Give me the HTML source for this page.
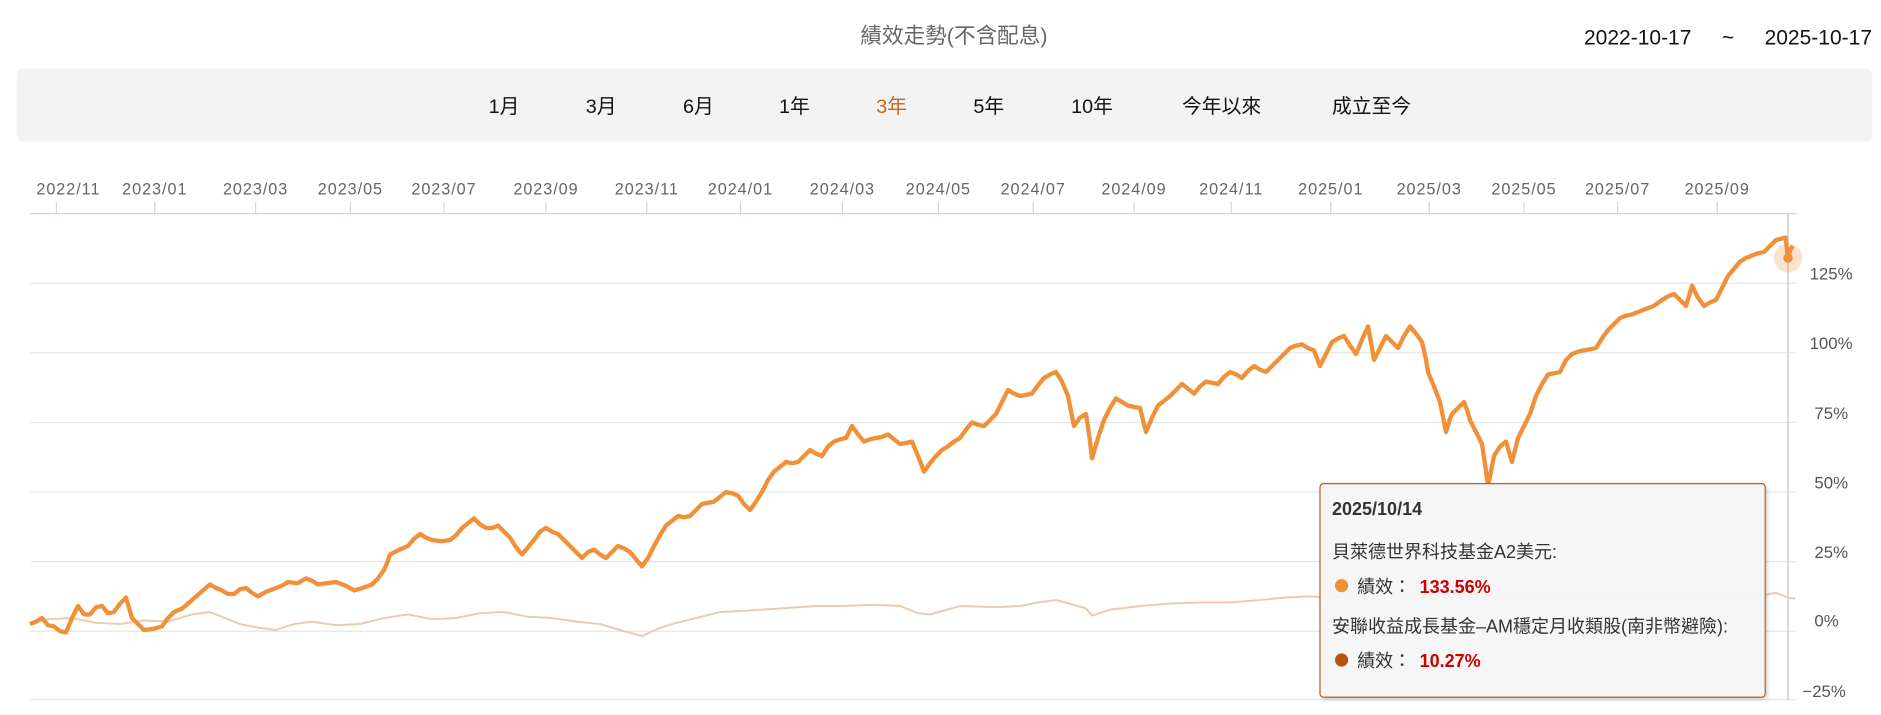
<!DOCTYPE html>
<html><head><meta charset="utf-8"><style>
html,body{margin:0;padding:0;background:#fff;width:1881px;height:715px;overflow:hidden}
svg{display:block;font-family:"Liberation Sans","Noto Sans CJK TC",sans-serif}
</style></head><body>
<svg width="1881" height="715" viewBox="0 0 1567.5 595.8" xmlns="http://www.w3.org/2000/svg">
<defs><filter id="sh" x="-10%" y="-10%" width="130%" height="130%"><feDropShadow dx="1.5" dy="1.5" stdDeviation="1.5" flood-color="#000" flood-opacity="0.18"/></filter></defs>
<text x="795" y="36" font-size="18" fill="#666" text-anchor="middle">績效走勢(不含配息)</text>
<text x="1320" y="37" font-size="17.5" fill="#111">2022-10-17</text>
<text x="1440" y="37" font-size="17.5" fill="#111" text-anchor="middle">~</text>
<text x="1560" y="37" font-size="17.5" fill="#111" text-anchor="end">2025-10-17</text>
<rect x="14" y="57" width="1546" height="61" rx="5" fill="#f3f3f3"/>
<g font-size="16.5" fill="#111" text-anchor="middle">
<text x="420" y="94">1月</text><text x="501" y="94">3月</text><text x="582" y="94">6月</text><text x="662" y="94">1年</text><text x="743" y="94" fill="#c8651b">3年</text><text x="824" y="94">5年</text><text x="910" y="94">10年</text><text x="1018" y="94">今年以來</text><text x="1143" y="94">成立至今</text>
</g>
<g font-size="13.5" fill="#666" text-anchor="middle" letter-spacing="0.8">
<text x="57" y="162">2022/11</text><text x="129" y="162">2023/01</text><text x="213" y="162">2023/03</text><text x="292" y="162">2023/05</text><text x="370" y="162">2023/07</text><text x="455" y="162">2023/09</text><text x="539" y="162">2023/11</text><text x="617" y="162">2024/01</text><text x="702" y="162">2024/03</text><text x="782" y="162">2024/05</text><text x="861" y="162">2024/07</text><text x="945" y="162">2024/09</text><text x="1026" y="162">2024/11</text><text x="1109" y="162">2025/01</text><text x="1191" y="162">2025/03</text><text x="1270" y="162">2025/05</text><text x="1348" y="162">2025/07</text><text x="1431" y="162">2025/09</text>
</g>
<g stroke="#ccd6eb" stroke-width="1">
<line x1="25" y1="178" x2="1497" y2="178"/>
<path d="M47 168V178M129 168V178M213 168V178M292 168V178M370 168V178M455 168V178M539 168V178M617 168V178M702 168V178M782 168V178M861 168V178M945 168V178M1026 168V178M1109 168V178M1191 168V178M1270 168V178M1348 168V178M1431 168V178"/>
</g>
<g stroke="#e6e6e6" stroke-width="1">
<line x1="25" y1="236" x2="1497" y2="236"/><line x1="25" y1="294" x2="1497" y2="294"/><line x1="25" y1="352" x2="1497" y2="352"/><line x1="25" y1="410" x2="1497" y2="410"/><line x1="25" y1="468" x2="1497" y2="468"/><line x1="25" y1="526" x2="1497" y2="526"/><line x1="25" y1="583" x2="1497" y2="583"/>
</g>
<g font-size="14" fill="#555">
<text x="1508" y="233">125%</text><text x="1508" y="291">100%</text><text x="1512" y="349">75%</text><text x="1512" y="407">50%</text><text x="1512" y="465">25%</text><text x="1512" y="522">0%</text><text x="1502" y="581">−25%</text>
</g>
<line x1="1490" y1="178" x2="1490" y2="583" stroke="#ccc" stroke-width="1.2"/>
<polyline fill="none" stroke="#edc9ae" stroke-width="1.6" stroke-linejoin="round" points="25,520 40,516 60,515 80,519 100,520 120,517 140,518 160,512 175,510 190,516 200,520 215,523 230,525 245,520 260,518 280,521 300,520 320,515 340,512 360,516 380,515 400,511 420,510 440,514 460,515 480,518 500,520 520,526 535,530 548,524 560,520 580,515 600,510 620,509 650,507 680,505 700,505 730,504 750,505 765,511 775,512 800,505 830,506 850,505 865,502 880,500 895,504 905,507 910,513 925,508 950,505 975,503 1000,502 1025,502 1050,500 1070,498 1090,497 1110,498 1140,497 1180,497 1230,498 1280,499 1330,498 1380,499 1420,498 1450,498 1470,496 1480,494 1490,498 1496,499"/>
<polyline fill="none" stroke="#f0913a" stroke-width="3.6" stroke-linejoin="round" points="25,520 30,518 35,515 40,521 45,522 50,526 55,527 60,515 65,505 70,512 75,512 80,506 85,505 90,511 95,510 100,503 105,498 110,515 115,520 120,525 128,524 135,522 140,515 145,510 152,507 160,500 168,493 175,487 180,490 185,492 190,495 195,495 200,491 205,490 210,494 215,497 222,493 230,490 235,488 240,485 248,486 255,482 260,484 265,487 272,486 280,485 288,488 295,492 302,490 310,487 315,482 320,475 323,468 325,462 333,458 340,455 345,449 350,445 355,448 360,450 368,451 375,450 380,446 385,440 390,436 395,432 400,437 405,440 410,440 415,438 420,443 425,448 430,456 435,462 440,456 445,450 450,443 455,440 460,443 465,445 470,450 475,455 480,460 485,465 490,460 495,458 500,462 505,465 510,460 515,455 520,457 525,460 530,466 535,472 540,465 545,455 550,446 555,438 560,434 565,430 570,431 575,430 580,425 585,420 590,419 595,418 600,414 605,410 610,411 615,413 620,420 625,425 630,418 635,410 640,400 645,393 650,389 655,385 660,386 665,385 670,380 675,375 680,378 685,380 690,372 695,368 700,366 705,365 710,355 715,362 720,368 725,366 730,365 735,364 740,362 745,366 750,370 755,369 760,368 765,380 770,393 775,386 780,380 785,375 790,372 795,368 800,365 805,358 810,352 815,354 820,355 825,350 830,345 835,335 840,325 845,328 850,330 855,329 860,328 865,321 870,315 875,312 880,310 885,318 890,330 893,345 895,355 900,348 905,345 908,365 910,382 915,365 920,350 925,340 930,332 935,335 940,338 945,339 950,340 953,352 955,360 960,348 965,338 970,334 975,330 980,325 985,320 990,324 995,328 1000,322 1005,318 1010,319 1015,320 1020,314 1025,310 1030,312 1035,315 1040,309 1045,305 1050,308 1055,310 1060,305 1065,300 1070,295 1075,290 1080,288 1085,287 1090,290 1095,292 1098,300 1100,305 1105,295 1110,285 1115,282 1120,280 1125,288 1130,295 1135,283 1140,272 1143,288 1145,300 1150,290 1155,280 1160,285 1165,290 1170,280 1175,272 1180,278 1185,285 1188,298 1190,310 1195,322 1200,335 1203,350 1205,360 1208,350 1210,345 1215,340 1220,335 1223,343 1225,350 1230,360 1235,370 1238,390 1240,405 1243,390 1245,380 1250,372 1255,368 1258,378 1260,385 1263,373 1265,365 1270,355 1275,345 1278,336 1280,330 1285,320 1290,312 1295,311 1300,310 1305,300 1310,295 1315,293 1320,292 1325,291 1330,290 1335,282 1340,275 1345,270 1350,265 1355,263 1360,262 1365,260 1370,258 1378,255 1385,250 1390,247 1395,245 1400,250 1405,255 1408,245 1410,238 1415,248 1420,255 1425,252 1430,250 1435,240 1440,230 1445,224 1450,218 1455,215 1460,213 1465,211 1470,210 1475,205 1480,200 1484,199 1488,198 1490,215 1492,208 1494,205"/>
<circle cx="1490" cy="215" r="12" fill="#f0913a" opacity="0.25"/>
<circle cx="1490" cy="215" r="4" fill="#f0913a"/>
<g filter="url(#sh)"><rect x="1100" y="403" width="371" height="178" rx="3" fill="#f7f7f7" fill-opacity="0.96" stroke="#b3601f" stroke-width="1"/></g>
<text x="1110" y="429" font-size="15" font-weight="bold" fill="#333">2025/10/14</text>
<text x="1110" y="465" font-size="15" fill="#333">貝萊德世界科技基金A2美元:</text>
<circle cx="1118" cy="488" r="5.5" fill="#f0913a"/>
<text x="1131" y="494" font-size="15" fill="#333">績效：</text>
<text x="1183" y="494" font-size="15" font-weight="bold" fill="#c00">133.56%</text>
<text x="1110" y="527" font-size="15" fill="#333">安聯收益成長基金–AM穩定月收類股(南非幣避險):</text>
<circle cx="1118" cy="550" r="5.5" fill="#b5540f"/>
<text x="1131" y="556" font-size="15" fill="#333">績效：</text>
<text x="1183" y="556" font-size="15" font-weight="bold" fill="#c00">10.27%</text>
</svg>
</body></html>
